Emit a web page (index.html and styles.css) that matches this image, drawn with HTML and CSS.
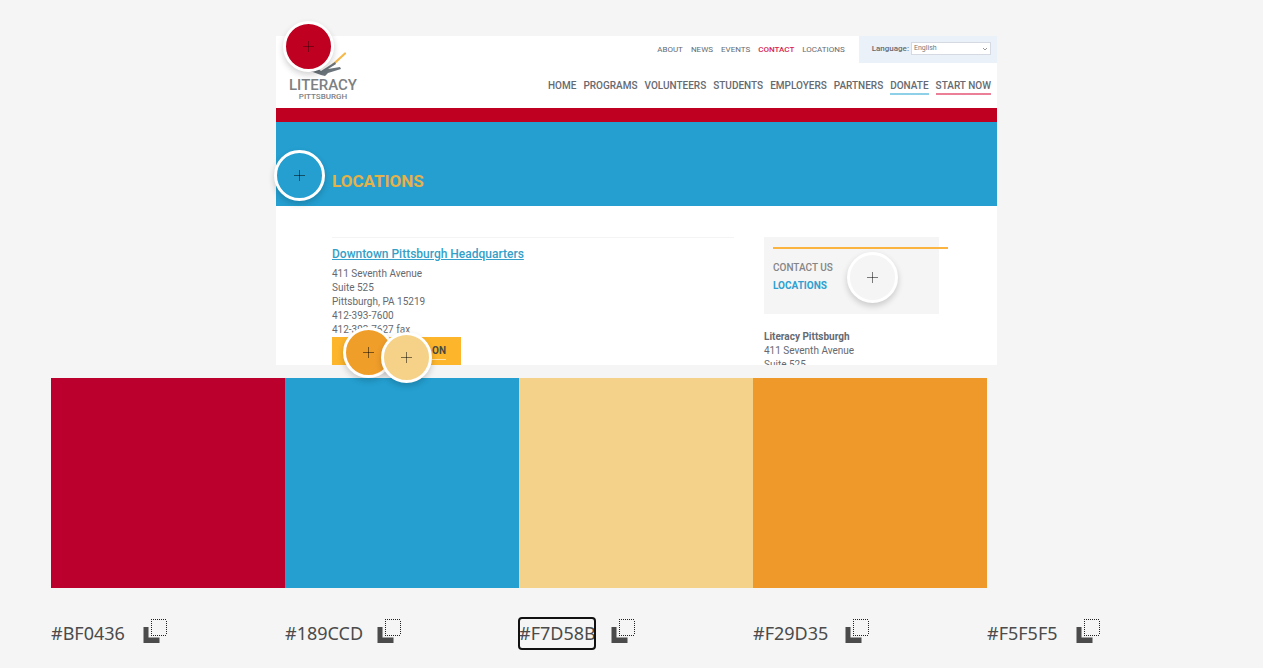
FILE: index.html
```html
<!DOCTYPE html>
<html lang="en">
<head>
<meta charset="utf-8">
<title>Extract theme</title>
<link rel="stylesheet" href="styles.css">
</head>
<body>
<svg class="defs" aria-hidden="true">
  <symbol id="copy" viewBox="0 0 24 24">
    <path d="M.5 8h5v10.500h11V24H.5z" fill="#4b4b4b"/>
    <path d="M8 .5h17M8 16.500h17M8.500 2v14M23.500 2v14" fill="none" stroke="#222" stroke-dasharray="1 1"/>
  </symbol>
  <symbol id="plus" viewBox="0 0 11 11">
    <path d="M5.500 0v11M0 5.500h11" stroke="currentColor"/>
  </symbol>
</svg>
<main class="theme">
  <section class="picker">
    <div class="shot">
      <header class="site-header">
        <div class="logo">
          <svg class="logo-mark" viewBox="0 0 48 26" aria-hidden="true">
            <path d="M34 13.500L46 2.500" stroke="#f7b84a" stroke-width="2.200" stroke-linecap="round"/>
            <path d="M11 20L17 20L13 13L22 20L36 11L37 13L29 18L41 16L42 18L29 22L26 25L22 24Z" fill="#6c757c"/>
          </svg>
          <strong class="logo-name">LITERACY</strong>
          <span class="logo-city">PITTSBURGH</span>
        </div>
        <div class="menus">
          <div class="top-row">
            <nav class="top-nav">
              <a href="#">ABOUT</a><a href="#">NEWS</a><a href="#">EVENTS</a><a href="#" class="current">CONTACT</a><a href="#">LOCATIONS</a>
            </nav>
            <div class="language">
              <label for="lang">Language:</label>
              <span class="select-box">
                <select id="lang"><option>English</option></select>
                <svg class="chevron" viewBox="0 0 6 4" aria-hidden="true"><path d="M1 1l2 2 2-2" fill="none" stroke="#999"/></svg>
              </span>
            </div>
          </div>
          <nav class="main-nav">
            <a href="#">HOME</a><a href="#">PROGRAMS</a><a href="#">VOLUNTEERS</a><a href="#">STUDENTS</a><a href="#">EMPLOYERS</a><a href="#">PARTNERS</a><a href="#" class="donate">DONATE</a><a href="#" class="start">START NOW</a>
          </nav>
        </div>
      </header>
      <div class="banner"><h1>LOCATIONS</h1></div>
      <div class="content">
        <article class="office">
          <h2><a href="#">Downtown Pittsburgh Headquarters</a></h2>
          <address>411 Seventh Avenue<br>Suite 525<br>Pittsburgh, PA 15219<br>412-393-7600<br>412-393-7627 fax</address>
          <a href="#" class="office-button"><span>ON</span></a>
        </article>
        <aside>
          <nav class="side-nav">
            <a href="#">CONTACT US</a>
            <a href="#" class="here">LOCATIONS</a>
          </nav>
          <address><strong>Literacy Pittsburgh</strong><br>411 Seventh Avenue<br>Suite 525</address>
        </aside>
      </div>
    </div>
    <button class="pin pin-red" aria-label="Colour 1"><svg><use href="#plus"/></svg></button>
    <button class="pin pin-blue" aria-label="Colour 2"><svg><use href="#plus"/></svg></button>
    <button class="pin pin-orange" aria-label="Colour 4"><svg><use href="#plus"/></svg></button>
    <button class="pin pin-sand" aria-label="Colour 3"><svg><use href="#plus"/></svg></button>
    <button class="pin pin-grey" aria-label="Colour 5"><svg><use href="#plus"/></svg></button>
  </section>
  <section class="swatches">
    <div class="swatch"><div class="fill red"></div><div class="code"><input class="hex" aria-label="Hex 1" value="#BF0436"><button class="copy" aria-label="Copy"><svg><use href="#copy"/></svg></button></div></div>
    <div class="swatch"><div class="fill blue"></div><div class="code"><input class="hex" aria-label="Hex 2" value="#189CCD"><button class="copy" aria-label="Copy"><svg><use href="#copy"/></svg></button></div></div>
    <div class="swatch"><div class="fill sand"></div><div class="code"><input class="hex focused" aria-label="Hex 3" value="#F7D58B"><button class="copy" aria-label="Copy"><svg><use href="#copy"/></svg></button></div></div>
    <div class="swatch"><div class="fill orange"></div><div class="code"><input class="hex" aria-label="Hex 4" value="#F29D35"><button class="copy" aria-label="Copy"><svg><use href="#copy"/></svg></button></div></div>
    <div class="swatch"><div class="fill grey"></div><div class="code"><input class="hex short" aria-label="Hex 5" value="#F5F5F5"><button class="copy" aria-label="Copy"><svg><use href="#copy"/></svg></button></div></div>
  </section>
</main>
</body>
</html>
```
FILE: styles.css
```css
* { box-sizing: border-box; }
body { margin: 0; background: #f5f5f5; font-family: "Noto Sans", sans-serif; color: #4b4b4b; }
a { color: inherit; text-decoration: none; }
address { font-style: normal; }
.defs { position: absolute; width: 0; height: 0; }
.theme { padding: 36px 41px 16px 51px; }

/* Picture with the colour pins */
.picker { position: relative; max-width: 721px; margin: 0 auto 13px; }
.shot { height: 329px; overflow: hidden; background: #fff; font-family: Roboto, sans-serif; font-size: 10px; line-height: 14px; color: #666a70; }
.site-header { display: flex; justify-content: space-between; height: 72px; }
.logo { display: flex; flex-direction: column; align-items: center; padding: 15px 0 0 13px; color: #7d8082; }
.logo-mark { width: 48px; height: 26px; }
.logo-name { font-size: 15px; line-height: 16px; font-weight: 500; }
.logo-city { font-size: 8px; line-height: 8px; font-weight: 500; }
.menus { display: flex; flex-direction: column; align-items: flex-end; gap: 16px; }
.top-row { display: flex; gap: 14px; }
.top-nav { display: flex; align-items: center; gap: 8px; font-size: 8px; }
.current { color: #d8234e; font-weight: 500; }
.language { display: flex; align-items: center; gap: 2px; height: 27px; padding: 0 6px 2px 13px; background: #ebf1f9; font-size: 8px; font-weight: 500; }
.select-box { position: relative; display: flex; }
.select-box select { appearance: none; width: 80px; height: 13px; padding: 0 2px; border: 1px solid #d5dae2; border-radius: 0; background: #fff; font: 7px/11px Roboto, sans-serif; color: #777; }
.chevron { position: absolute; right: 3px; top: 5px; width: 6px; height: 4px; }
.main-nav { display: flex; gap: 7px; padding-right: 6px; font-weight: 500; }
.donate { border-bottom: 2px solid #8fd0e9; }
.start { border-bottom: 2px solid #ec7f98; }
.banner { height: 98px; padding: 50px 56px 0; border-top: 14px solid #bf0020; background: #249fd0; }
.banner h1 { margin: 0; font-size: 17px; line-height: 19px; font-weight: 700; color: #e5b149; }
.content { display: flex; gap: 30px; padding: 31px 58px 0 56px; }
.office { flex: 1; border-top: 1px solid #f4f4f4; }
.office h2 { margin: 8px 0 5px; font-size: 12px; line-height: 16px; font-weight: 500; color: #349fc8; }
.office h2 a { text-decoration: underline; }
.office-button { display: flex; justify-content: flex-end; width: 129px; height: 30px; padding: 7px 15px; background: #fdb52b; font-weight: 700; color: #4a4a40; }
.office-button span { height: 16px; border-bottom: 1px solid #ffe2a6; }
aside { width: 175px; }
.side-nav { display: flex; flex-direction: column; gap: 4px; height: 77px; margin-bottom: 16px; padding: 10px 0 0 9px; background: #f5f5f5; font-weight: 500; color: #858585; }
.side-nav::before { content: ""; flex: none; width: 175px; height: 2px; margin-bottom: 8px; background: #fbb440; }
.here { color: #2fa0d0; font-weight: 700; }

.pin { position: absolute; display: grid; place-items: center; width: 51px; height: 51px; padding: 0; border: 3px solid #fff; border-radius: 50%; box-shadow: 0 3px 6px rgba(0, 0, 0, .18); color: rgba(0, 0, 0, .5); }
.pin svg { width: 11px; height: 11px; }
.pin-red { left: 7px; top: -15px; background: #bf0020; color: rgba(0, 0, 0, .35); }
.pin-blue { left: -2px; top: 114px; background: #249fd0; }
.pin-orange { left: 67px; top: 291px; background: #f09e2a; }
.pin-sand { left: 105px; top: 296px; background: #f5d287; }
.pin-grey { left: 571px; top: 216px; background: #f5f5f5; }

/* Palette */
.swatches { display: grid; grid-template-columns: repeat(5, 1fr); margin-right: 1px; }
.fill { height: 210px; margin-bottom: 29px; }
.red { background: #bb002d; }
.blue { background: #249fd0; }
.sand { background: #f5d289; }
.orange { background: #ee992a; }
.grey { background: #f5f5f5; }
.code { display: flex; align-items: flex-start; gap: 14px; }
.hex { width: 78px; height: 31px; margin-top: 1px; padding: 0; border: 0; background: none; font: 18px/31px "Noto Sans", sans-serif; color: #4b4b4b; }
.short { width: 75px; }
.focused { width: 76px; margin-right: 2px; outline: 2px solid #111; outline-offset: -1px; border-radius: 3px; }
.copy { width: 24px; height: 24px; margin-top: 2px; padding: 0; border: 0; background: none; }
.copy svg { display: block; width: 24px; height: 24px; }
```
